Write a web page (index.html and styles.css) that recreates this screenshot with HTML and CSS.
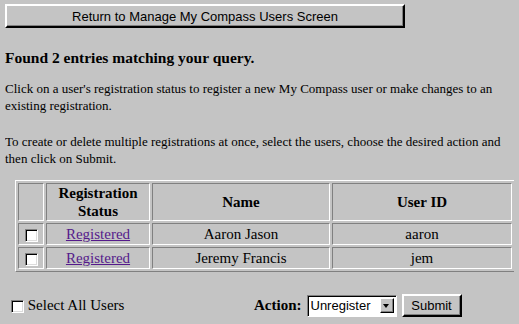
FILE: index.html
```html
<!DOCTYPE html>
<html lang="en">
<head>
    <meta charset="UTF-8">
    <title>My Compass Users</title>
    <link rel="stylesheet" href="styles.css">
</head>
<body>
    <form>
        <div class="topo">
            <input class="botao-voltar" type="button" value="Return to Manage My Compass Users Screen">
        </div>

        <h4>Found 2 entries matching your query.</h4>

        <p class="p1">Click on a user's registration status to register a new My Compass user or make changes to an existing registration.</p>
        <p class="p2">To create or delete multiple registrations at once, select the users, choose the desired action and then click on Submit.</p>

        <table class="usuarios">
            <tr>
                <th class="col-check"></th>
                <th class="col-status">Registration Status</th>
                <th class="col-nome">Name</th>
                <th>User ID</th>
            </tr>
            <tr>
                <td><input type="checkbox"></td>
                <td><a href="#">Registered</a></td>
                <td>Aaron Jason</td>
                <td>aaron</td>
            </tr>
            <tr>
                <td><input type="checkbox"></td>
                <td><a href="#">Registered</a></td>
                <td>Jeremy Francis</td>
                <td>jem</td>
            </tr>
        </table>

        <div class="acoes">
            <label class="todos"><input type="checkbox"> Select All Users</label>
            <div class="enviar">
                <b>Action:</b>
                <span class="lista">
                    <select>
                        <option>Unregister</option>
                        <option>Register</option>
                    </select>
                    <span class="seta"></span>
                </span>
                <input class="botao" type="button" value="Submit">
            </div>
        </div>
    </form>
</body>
</html>
```

FILE: styles.css
```css
body {
    margin: 4px 5px;
    background: #c4c4c4;
    color: #000;
    font-family: "Liberation Serif", serif;
    font-size: 13px;
}

.botao-voltar {
    width: 400px;
    height: 24px;
    margin: 0;
    background: #c4c4c4;
    border: 2px solid;
    border-color: #fff #000 #000 #fff;
    box-shadow: inset -1px -1px 0 #808080;
    font-family: "Liberation Sans", sans-serif;
    font-size: 13px;
    color: #000;
}

h4 {
    margin: 20px 0 0;
    font-size: 15.5px;
    line-height: 20px;
}

p {
    line-height: 17px;
}

p.p1 {
    margin: 12px 0 0;
}

p.p2 {
    margin: 19px 0 0;
}

table.usuarios {
    margin: 13px 0 0 10px;
    width: 500px;
    border: 1px solid;
    border-color: #fff #808080 #808080 #fff;
    border-spacing: 2px;
}

table.usuarios th,
table.usuarios td {
    border: 1px solid;
    border-color: #808080 #fff #fff #808080;
    text-align: center;
    vertical-align: middle;
    padding: 0 1px;
}

table.usuarios th {
    font-size: 15px;
    line-height: 18px;
    height: 36px;
}

table.usuarios td {
    font-size: 15px;
    line-height: 18px;
    height: 20px;
}

.col-check { width: 22px; }
.col-status { width: 100px; }
.col-nome { width: 174px; }

table.usuarios a {
    color: #551a8b;
}

input[type="checkbox"] {
    appearance: none;
    margin: 0;
    width: 13px;
    height: 13px;
    vertical-align: middle;
    background: #fff;
    border: 1px solid;
    border-color: #808080 #fff #fff #808080;
    box-shadow: inset 1px 1px 0 #000, inset -1px -1px 0 #dcdcdc;
}

.acoes {
    display: flex;
    align-items: center;
    margin: 22px 0 0 6px;
    font-size: 15px;
}

.todos {
    width: 243px;
}

.enviar {
    display: flex;
    align-items: center;
}

.enviar b {
    font-size: 15px;
    margin-right: 5px;
}

.lista {
    position: relative;
    display: inline-block;
}

.lista select {
    appearance: none;
    display: block;
    width: 90px;
    height: 22px;
    margin: 0;
    padding: 0 0 0 3px;
    font-family: "Liberation Sans", sans-serif;
    font-size: 13px;
    color: #000;
    background: #fff;
    border: 1px solid;
    border-color: #808080 #fff #fff #808080;
    box-shadow: inset 1px 1px 0 #000;
}

.seta {
    position: absolute;
    top: 3px;
    right: 3px;
    width: 14px;
    height: 15px;
    box-sizing: border-box;
    background: #c4c4c4;
    border: 1px solid;
    border-color: #fff #000 #000 #fff;
    box-shadow: inset -1px -1px 0 #808080;
    pointer-events: none;
}

.seta::after {
    content: "";
    position: absolute;
    left: 2px;
    top: 5px;
    border-left: 3.5px solid transparent;
    border-right: 3.5px solid transparent;
    border-top: 4px solid #000;
}

.botao {
    width: 60px;
    height: 23px;
    margin-left: 5px;
    background: #c4c4c4;
    border: 2px solid;
    border-color: #fff #000 #000 #fff;
    box-shadow: inset -1px -1px 0 #808080;
    font-family: "Liberation Sans", sans-serif;
    font-size: 13px;
    color: #000;
}
```
